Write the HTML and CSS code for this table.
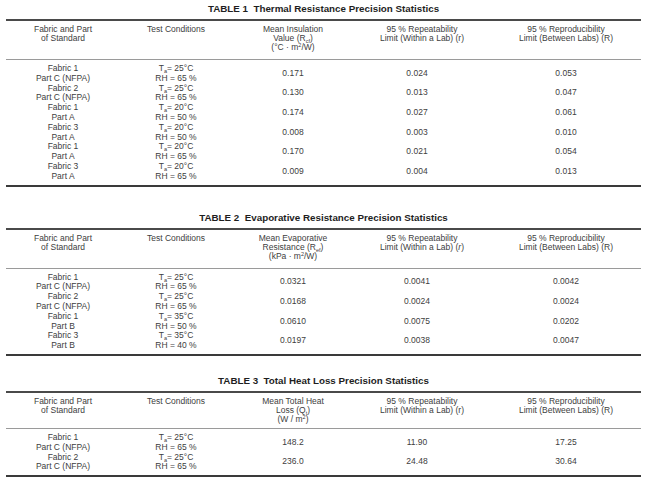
FILE: index.html
```html
<!DOCTYPE html>
<html>
<head>
<meta charset="utf-8">
<link rel="stylesheet" href="styles.css">
</head>
<body>
<section class="block gap-lg">
  <h2 class="cap">TABLE 1&nbsp;&nbsp;Thermal Resistance Precision Statistics</h2>
  <table class="stats">
    <colgroup><col class="c1"><col class="c2"><col class="c3"><col class="c4"><col class="c5"></colgroup>
    <thead>
      <tr>
        <th>Fabric and Part<br>of Standard</th>
        <th>Test Conditions</th>
        <th>Mean Insulation<br>Value (R<sub>cf</sub>)<br>(°C · m<sup>2</sup>/W)</th>
        <th class="p4">95 % Repeatability<br>Limit (Within a Lab) (r)</th>
        <th class="p5">95 % Reproducibility<br>Limit (Between Labs) (R)</th>
      </tr>
    </thead>
    <tbody>
      <tr class="first"><td>Fabric 1<br>Part C (NFPA)</td><td>T<sub>a</sub>= 25°C<br>RH = 65 %</td><td>0.171</td><td class="p4">0.024</td><td class="p5">0.053</td></tr>
      <tr><td>Fabric 2<br>Part C (NFPA)</td><td>T<sub>a</sub>= 25°C<br>RH = 65 %</td><td>0.130</td><td class="p4">0.013</td><td class="p5">0.047</td></tr>
      <tr><td>Fabric 1<br>Part A</td><td>T<sub>a</sub>= 20°C<br>RH = 50 %</td><td>0.174</td><td class="p4">0.027</td><td class="p5">0.061</td></tr>
      <tr><td>Fabric 3<br>Part A</td><td>T<sub>a</sub>= 20°C<br>RH = 50 %</td><td>0.008</td><td class="p4">0.003</td><td class="p5">0.010</td></tr>
      <tr><td>Fabric 1<br>Part A</td><td>T<sub>a</sub>= 20°C<br>RH = 65 %</td><td>0.170</td><td class="p4">0.021</td><td class="p5">0.054</td></tr>
      <tr class="last"><td>Fabric 3<br>Part A</td><td>T<sub>a</sub>= 20°C<br>RH = 65 %</td><td>0.009</td><td class="p4">0.004</td><td class="p5">0.013</td></tr>
    </tbody>
  </table>
</section>

<section class="block gap-sm">
  <h2 class="cap">TABLE 2&nbsp;&nbsp;Evaporative Resistance Precision Statistics</h2>
  <table class="stats">
    <colgroup><col class="c1"><col class="c2"><col class="c3"><col class="c4"><col class="c5"></colgroup>
    <thead>
      <tr>
        <th>Fabric and Part<br>of Standard</th>
        <th>Test Conditions</th>
        <th>Mean Evaporative<br>Resistance (R<sub>ef</sub>)<br>(kPa · m<sup>2</sup>/W)</th>
        <th class="p4">95 % Repeatability<br>Limit (Within a Lab) (<i>r</i>)</th>
        <th class="p5">95 % Reproducibility<br>Limit (Between Labs) (R)</th>
      </tr>
    </thead>
    <tbody>
      <tr class="first"><td>Fabric 1<br>Part C (NFPA)</td><td>T<sub>a</sub>= 25°C<br>RH = 65 %</td><td>0.0321</td><td class="p4">0.0041</td><td class="p5">0.0042</td></tr>
      <tr><td>Fabric 2<br>Part C (NFPA)</td><td>T<sub>a</sub>= 25°C<br>RH = 65 %</td><td>0.0168</td><td class="p4">0.0024</td><td class="p5">0.0024</td></tr>
      <tr><td>Fabric 1<br>Part B</td><td>T<sub>a</sub>= 35°C<br>RH = 50 %</td><td>0.0610</td><td class="p4">0.0075</td><td class="p5">0.0202</td></tr>
      <tr class="last"><td>Fabric 3<br>Part B</td><td>T<sub>a</sub>= 35°C<br>RH = 40 %</td><td>0.0197</td><td class="p4">0.0038</td><td class="p5">0.0047</td></tr>
    </tbody>
  </table>
</section>

<section class="block">
  <h2 class="cap">TABLE 3&nbsp;&nbsp;Total Heat Loss Precision Statistics</h2>
  <table class="stats short">
    <colgroup><col class="c1"><col class="c2"><col class="c3"><col class="c4"><col class="c5"></colgroup>
    <thead>
      <tr>
        <th>Fabric and Part<br>of Standard</th>
        <th>Test Conditions</th>
        <th>Mean Total Heat<br>Loss (Q<sub>t</sub>)<br>(W / m<sup>2</sup>)</th>
        <th class="p4">95 % Repeatability<br>Limit (Within a Lab) (r)</th>
        <th class="p5">95 % Reproducibility<br>Limit (Between Labs) (R)</th>
      </tr>
    </thead>
    <tbody>
      <tr class="first"><td>Fabric 1<br>Part C (NFPA)</td><td>T<sub>a</sub>= 25°C<br>RH = 65 %</td><td>148.2</td><td class="p4">11.90</td><td class="p5">17.25</td></tr>
      <tr class="last"><td>Fabric 2<br>Part C (NFPA)</td><td>T<sub>a</sub>= 25°C<br>RH = 65 %</td><td>236.0</td><td class="p4">24.48</td><td class="p5">30.64</td></tr>
    </tbody>
  </table>
</section>
</body>
</html>
```

FILE: styles.css
```css
html, body {
  margin: 0;
  background: #ffffff;
}
body {
  padding: 3px 15px 0 6px;
  font-family: "Liberation Sans", Arial, sans-serif;
  color: #404040;
}
.block {
  margin-bottom: 0;
}
.gap-lg {
  margin-bottom: 25px;
}
.gap-sm {
  margin-bottom: 19px;
}
.cap {
  margin: 0 0 4px 0;
  font-size: 9.8px;
  line-height: 12px;
  font-weight: bold;
  color: #1e1e1e;
  text-align: center;
}
.stats {
  width: 635px;
  border-collapse: collapse;
  table-layout: fixed;
  font-size: 8.5px;
  line-height: 9.8px;
  border-top: 2px solid #4a4a4a;
  border-bottom: 2px solid #3a3a3a;
}
.c1 { width: 114px; }
.c2 { width: 112px; }
.c3 { width: 122px; }
.c4 { width: 128px; }
.c5 { width: 159px; }
.stats th {
  font-weight: normal;
  vertical-align: top;
  text-align: center;
  line-height: 9px;
  padding: 4px 0 7px 0;
  height: 27px;
  border-bottom: 1px solid #9a9a9a;
}
.stats.short th {
  padding-bottom: 4px;
}
.stats td {
  text-align: center;
  vertical-align: middle;
  padding: 0;
  white-space: nowrap;
}
.stats tr.first td { padding-top: 4px; }
.stats tr.last td { padding-bottom: 3px; }
.stats td.p4 { padding-right: 2px; }
.stats th.p4 { padding-left: 8px; }
.stats .p5 { padding-left: 9px; }
.stats sub {
  font-size: 5.5px;
  line-height: 0;
  vertical-align: -1.5px;
}
.stats sup {
  font-size: 5.5px;
  line-height: 0;
  vertical-align: 3px;
}
```
